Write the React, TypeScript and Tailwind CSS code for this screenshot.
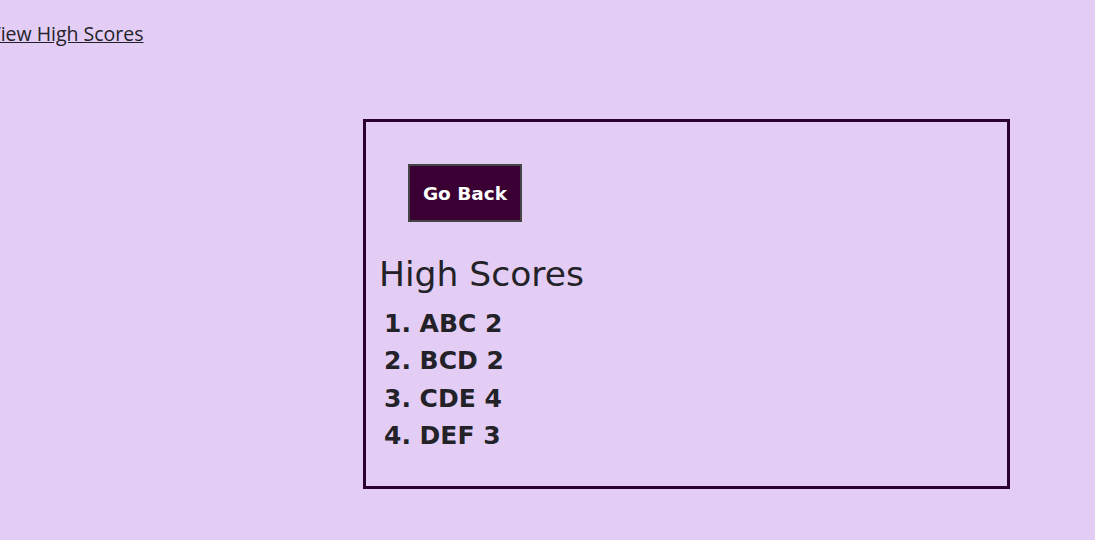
import React from "react";

const scores = [
  { initials: "ABC", score: 2 },
  { initials: "BCD", score: 2 },
  { initials: "CDE", score: 4 },
  { initials: "DEF", score: 3 },
];

const App: React.FunctionComponent = () => {
  return (
    <div className="min-h-screen bg-[#e4cdf4] font-['DejaVu_Sans',sans-serif] text-[#222228]">
      {/* Top link */}
      <div className="h-[70px] pt-[19px]">
        <a
          href="#"
          className="-ml-[11px] font-['Open_Sans',sans-serif] text-[19.5px] underline text-[#222228]"
        >
          View High Scores
        </a>
      </div>

      {/* Scores box */}
      <div className="ml-[363px] mt-[49px] w-[647px] h-[370px] border-[3px] border-[#2d0033] px-[13px] pt-[42px]">
        <button className="ml-[29px] w-[114px] h-[58px] border-2 border-[#454545] bg-[#3a0033] pt-[2px] text-white font-bold text-[18.5px]">
          Go Back
        </button>
        <h1 className="mt-[35px] text-[34.5px] leading-none">High Scores</h1>
        <ol className="mt-[19px] pl-[5px] font-bold text-[25px]">
          {scores.map((s, i) => (
            <li key={s.initials} className="h-[37.5px] leading-none">
              {i + 1}. {s.initials} {s.score}
            </li>
          ))}
        </ol>
      </div>
    </div>
  );
};

export default App;
